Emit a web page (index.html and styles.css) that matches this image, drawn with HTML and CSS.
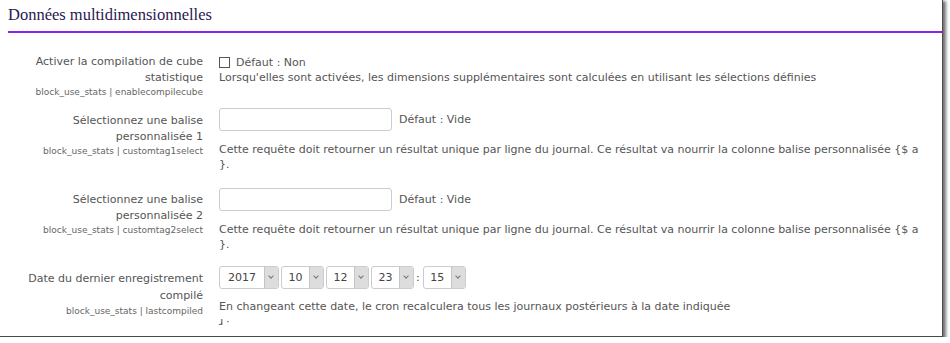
FILE: index.html
```html
<!DOCTYPE html>
<html lang="fr">
<head>
<meta charset="utf-8">
<title>Données multidimensionnelles</title>
<link rel="stylesheet" href="styles.css">
</head>
<body>
<div class="window">
  <h2 class="section-title">Données multidimensionnelles</h2>

  <div class="setting setting-check">
    <div class="label">
      <div class="label-text">Activer la compilation de cube statistique</div>
      <div class="label-key">block_use_stats | enablecompilecube</div>
    </div>
    <div class="field">
      <div class="field-line">
        <span class="checkbox"></span>
        <span class="default">Défaut : Non</span>
      </div>
      <div class="desc">Lorsqu'elles sont activées, les dimensions supplémentaires sont calculées en utilisant les sélections définies</div>
    </div>
  </div>

  <div class="setting setting-text first-text">
    <div class="label">
      <div class="label-text">Sélectionnez une balise personnalisée 1</div>
      <div class="label-key">block_use_stats | customtag1select</div>
    </div>
    <div class="field">
      <div class="field-line">
        <span class="textbox"></span>
        <span class="default">Défaut : Vide</span>
      </div>
      <div class="desc">Cette requête doit retourner un résultat unique par ligne du journal. Ce résultat va nourrir la colonne balise personnalisée {$ a }.</div>
    </div>
  </div>

  <div class="setting setting-text second-text">
    <div class="label">
      <div class="label-text">Sélectionnez une balise personnalisée 2</div>
      <div class="label-key">block_use_stats | customtag2select</div>
    </div>
    <div class="field">
      <div class="field-line">
        <span class="textbox"></span>
        <span class="default">Défaut : Vide</span>
      </div>
      <div class="desc">Cette requête doit retourner un résultat unique par ligne du journal. Ce résultat va nourrir la colonne balise personnalisée {$ a }.</div>
    </div>
  </div>

  <div class="setting setting-date">
    <div class="label">
      <div class="label-text">Date du dernier enregistrement compilé</div>
      <div class="label-key">block_use_stats | lastcompiled</div>
    </div>
    <div class="field">
      <div class="field-line">
        <span class="select sel-year"><span class="sel-val">2017</span><span class="sel-arrow"></span></span>
        <span class="select"><span class="sel-val">10</span><span class="sel-arrow"></span></span>
        <span class="select"><span class="sel-val">12</span><span class="sel-arrow"></span></span>
        <span class="select"><span class="sel-val">23</span><span class="sel-arrow"></span></span>
        <span class="colon">:</span>
        <span class="select"><span class="sel-val">15</span><span class="sel-arrow"></span></span>
      </div>
      <div class="desc">En changeant cette date, le cron recalculera tous les journaux postérieurs à la date indiquée</div>
      <div class="cut">ɹ ·</div>
    </div>
  </div>
</div>
</body>
</html>
```

FILE: styles.css
```css
html, body {
  margin: 0;
  padding: 0;
  background: #ffffff;
}

body {
  font-family: "DejaVu Sans", sans-serif;
  font-size: 11px;
  color: #555555;
}

.window {
  width: 943px;
  height: 337px;
  box-sizing: border-box;
  background: #ffffff;
  border-right: 1px solid #4a4a4a;
  border-bottom: 1px solid #4a4a4a;
  box-shadow: 2px 2px 3px 1px rgba(0, 0, 0, 0.55);
  overflow: hidden;
}

.section-title {
  margin: 0 0 0 8px;
  padding: 5px 0 6px 0;
  font-family: "Liberation Serif", serif;
  font-weight: normal;
  font-size: 16.5px;
  line-height: 20px;
  color: #2a1850;
  border-bottom: 2px solid #8b22f0;
}

.setting {
  display: grid;
  grid-template-columns: 195px 1fr;
  column-gap: 16px;
  padding-left: 8px;
}

.label {
  text-align: right;
}

.label-text {
  line-height: 15.5px;
  color: #555555;
}

.label-key {
  font-size: 9px;
  line-height: 14px;
  color: #666666;
}

.field {
  padding-right: 17px;
}

.field-line {
  display: flex;
  align-items: center;
}

.desc {
  line-height: 15px;
}

.setting-check {
  margin-top: 21px;
}
.setting-check .field-line {
  height: 15px;
  padding-top: 1px;
}
.setting-check .desc {
  line-height: 16px;
}
.checkbox {
  width: 11px;
  height: 11px;
  border: 1px solid #555;
  box-sizing: border-box;
  margin-right: 6px;
}

.first-text {
  margin-top: 9px;
}
.second-text {
  margin-top: 16px;
}
.setting-text .label {
  padding-top: 5px;
}
.second-text .label {
  padding-top: 4px;
}
.textbox {
  width: 173px;
  height: 23px;
  box-sizing: border-box;
  border: 1px solid #cccccc;
  border-radius: 3px;
  background: #fff;
  margin-right: 7px;
}
.setting-text .desc {
  margin-top: 11px;
}

.setting-date {
  margin-top: 14px;
}
.setting-date .label {
  padding-top: 5px;
}
.setting-date .label-text {
  line-height: 16.5px;
}
.select {
  display: inline-flex;
  height: 23px;
  box-sizing: border-box;
  border: 1px solid #cccccc;
  border-radius: 3px;
  background: #fff;
  overflow: hidden;
  margin-right: 2px;
}
.sel-val {
  width: 27px;
  text-align: center;
  line-height: 21px;
  color: #444;
}
.sel-year .sel-val {
  width: 44px;
}
.sel-arrow {
  width: 13px;
  background: #dddddd;
  border-left: 1px solid #c4c4c4;
  position: relative;
}
.sel-arrow::after {
  content: "";
  position: absolute;
  left: 4px;
  top: 7px;
  width: 3px;
  height: 3px;
  border-right: 1px solid #777;
  border-bottom: 1px solid #777;
  transform: rotate(45deg);
}
.colon {
  margin: 0 3px 0 0;
  color: #444;
}
.setting-date .desc {
  margin-top: 10px;
  line-height: 16px;
}
.cut {
  line-height: 14px;
  font-size: 10px;
  color: #444;
}
```
